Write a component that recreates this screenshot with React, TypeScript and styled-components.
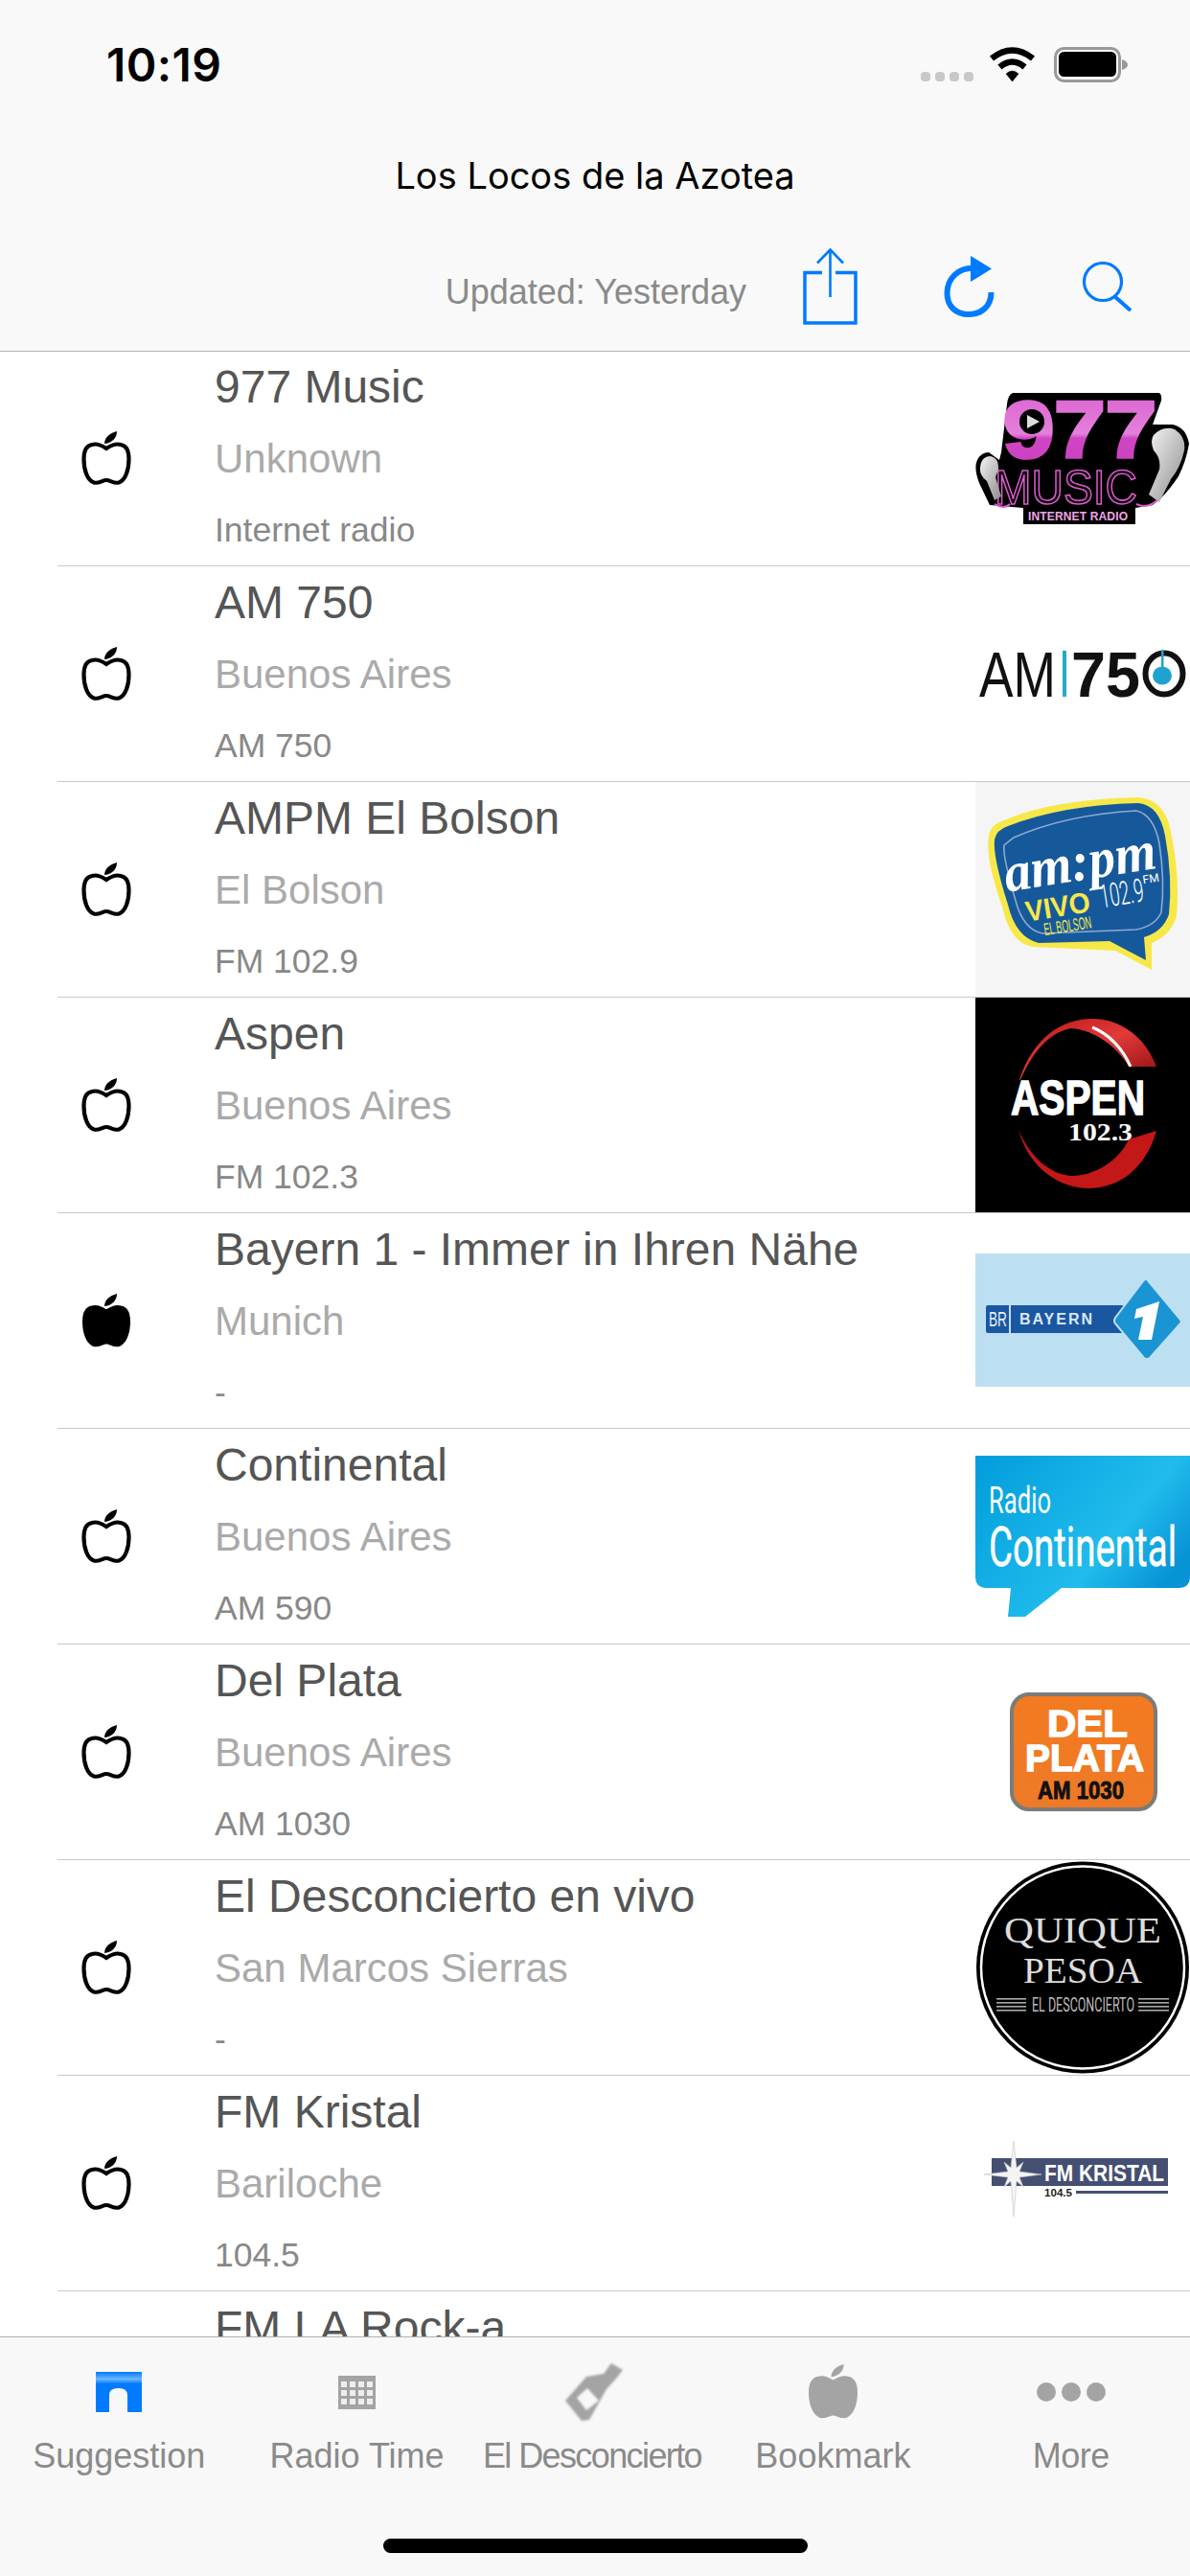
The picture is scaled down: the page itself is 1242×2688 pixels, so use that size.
import React from 'react';
import styled, { createGlobalStyle } from 'styled-components';

const Global = createGlobalStyle`
  html, body { margin: 0; padding: 0; background: #fff; }
  body { font-family: "Liberation Sans", Arial, sans-serif; overflow: hidden; }
`;

const Screen = styled.div`
  width: 1242px; height: 2688px; display: flex; flex-direction: column; overflow: hidden; background: #fff;
`;
const Header = styled.header`
  position: relative; z-index: 1; flex: none; height: 366px; background: #f9f9f9;
  box-shadow: 0 1px 0 #b4b4b4; display: flex; flex-direction: column;
`;
const StatusBar = styled.div`
  height: 132px; box-sizing: border-box; padding: 44px 65px 0 111px;
  display: flex; justify-content: space-between; align-items: flex-start;
`;
const Clock = styled.span`
  font: 600 48px/48px Inter, sans-serif; letter-spacing: 0.4px; color: #000;
`;
const StatusIcons = styled.div`
  display: flex; align-items: flex-start; margin-top: 5px;
`;
const Signal = styled.div`
  display: flex; gap: 5px; margin: 26px 16px 0 0;
`;
const SignalDot = styled.i`
  display: block; width: 10px; height: 10px; border-radius: 4px; background: #c8c8c8;
`;
const BatteryIcon = styled.svg`
  display: block; margin-left: 19px;
`;
const NavTitle = styled.div`
  height: 100px; box-sizing: border-box; padding-top: 2px; display: flex; align-items: center; justify-content: center;
  font: 400 38px Inter, sans-serif; color: #000;
`;
const Toolbar = styled.div`
  flex: 1; display: flex; align-items: center; justify-content: flex-end; padding-right: 60px;
`;
const Updated = styled.span`
  font-size: 36px; color: #8a8a8a; padding-top: 12px; margin-right: 59px;
`;
const ToolIcon = styled.svg<{ $gap?: number }>`
  display: block; flex: none; margin-right: ${p => p.$gap ?? 0}px;
`;
const List = styled.main`
  flex: 1; min-height: 0; overflow: hidden;
`;
const Row = styled.div`
  height: 225px; padding-left: 60px; box-sizing: border-box;
`;
const RowInner = styled.div`
  height: 225px; box-sizing: border-box; border-bottom: 1px solid #c8c8c8; display: flex;
`;
const FavCell = styled.div`
  flex: none; width: 102px; display: flex; align-items: center; justify-content: center; margin-right: 62px;
`;
const Texts = styled.div`
  flex: 1; min-width: 0;
`;
const Name = styled.div`
  font-size: 48px; line-height: 75px; color: #555; white-space: nowrap;
`;
const City = styled.div`
  font-size: 42px; line-height: 76px; color: #aaa; white-space: nowrap;
`;
const Freq = styled.div`
  font-size: 35.5px; line-height: 72px; color: #888; white-space: nowrap;
`;
const Thumb = styled.div<{ $bg?: string }>`
  flex: none; width: 224px; height: 224px; background: ${p => p.$bg ?? 'transparent'};
  svg { display: block; }
`;
const TabBar = styled.nav`
  position: relative; z-index: 1; flex: none; height: 250px; box-sizing: border-box; background: #f8f8f8;
  border-top: 1px solid #b0b0b0; display: flex; flex-direction: column;
`;
const Tabs = styled.div`
  display: grid; grid-template-columns: repeat(5, 1fr); padding-top: 22px;
`;
const Tab = styled.div`
  display: flex; flex-direction: column; align-items: center;
`;
const TabIconSlot = styled.div`
  height: 70px; display: flex; align-items: center; justify-content: center;
`;
const TabLabel = styled.span<{ $spacing?: number; $shift?: number }>`
  margin-top: 12px; font-size: 36px; line-height: 40px; color: #8a8a8a; white-space: nowrap;
  letter-spacing: ${p => p.$spacing ?? 0}px;
  margin-right: ${p => p.$shift ?? 0}px;
`;
const HomeBar = styled.div`
  align-self: center; margin-top: 66px; width: 443px; height: 15px; border-radius: 8px; background: #000;
`;
const SoftIcon = styled.svg<{ $blur?: number }>`
  display: block; filter: blur(${p => p.$blur ?? 0.7}px);
`;

const Apple = ({ filled, w = 52, h = 57, color = '#000' }: { filled?: boolean; w?: number; h?: number; color?: string }) => (
  <SoftIcon width={w} height={h} viewBox="0 0 52 57">
    <path d="M24 13 C24 7 29 2 37 0 C37 6 33 12 24 13 Z" fill={color} />
    <path
      d="M26 18 C20 14 14 13 11 14 C5 15 2.5 21 2.5 29 C2.5 40 6 51 13 53.5 C18 55 22 51 26 51 C30 51 34 55 39 53.5 C46 51 49.5 40 49.5 29 C49.5 21 47 15 41 14 C38 13 32 14 26 18 Z"
      fill={filled ? color : 'none'} stroke={color} strokeWidth={filled ? 3 : 4.2}
    />
  </SoftIcon>
);

const SANS = '"Liberation Sans", Arial, sans-serif';
const SERIF = '"Liberation Serif", "Times New Roman", serif';
const NARROW = 'Roboto, "Liberation Sans", sans-serif';

const Logo = ({ children }: { children: React.ReactNode }) => (
  <svg width={224} height={224} viewBox="0 0 224 224">{children}</svg>
);

const Logo977 = () => (
  <Logo>
    <defs>
      <linearGradient id="m977" x1="0" y1="0" x2="0" y2="1">
        <stop offset="0" stopColor="#d95fcf" /><stop offset="0.55" stopColor="#e480db" />
        <stop offset="0.6" stopColor="#cf45c3" /><stop offset="1" stopColor="#cb40bf" />
      </linearGradient>
      <linearGradient id="bud" x1="0" y1="0" x2="1" y2="1">
        <stop offset="0" stopColor="#f4f4f4" /><stop offset="1" stopColor="#8c8c8c" />
      </linearGradient>
    </defs>
    <path d="M39 44 H192 Q195 46 194 52 L185 77 H206 Q220 80 223 97 Q220 115 212 131 Q198 152 185 161 L167 164 V181 H50 V164 L15 161 L4 138 Q-2 122 2 114 Q6 106 14 106 L25 114 L27 106 L33 56 Q34 46 39 44 Z" fill="#000" />
    <text x="29" y="111" fontFamily={SANS} fontWeight="700" fontSize="84" fill="url(#m977)" stroke="url(#m977)" strokeWidth="3.5" textLength="160" lengthAdjust="spacingAndGlyphs">977</text>
    <circle cx="59" cy="74" r="13" fill="#000" />
    <path d="M54 67 L67 74 L54 81 Z" fill="#ddd" />
    <text x="20" y="160" fontFamily={SANS} fontSize="50" fill="none" stroke="#e05ad2" strokeWidth="1.6" textLength="149" lengthAdjust="spacingAndGlyphs">MUSIC</text>
    <path d="M20 160 Q30 166 36 160 M168 160 Q180 166 192 154" fill="none" stroke="#e05ad2" strokeWidth="2" />
    <rect x="50" y="164" width="117" height="17" fill="#000" />
    <text x="55" y="177" fontFamily={SANS} fontWeight="700" fontSize="12" fill="#f0a5e8" textLength="104" lengthAdjust="spacing">INTERNET RADIO</text>
    <path d="M186 88 Q196 78 208 82 Q220 90 218 104 Q214 122 204 134 L192 158 L181 150 L192 124 Q194 112 186 104 Q182 94 186 88 Z" fill="url(#bud)" />
    <path d="M5 122 Q6 110 16 110 Q25 112 24 124 L21 132 L27 152 L20 156 L12 136 Q4 130 5 122 Z" fill="url(#bud)" />
  </Logo>
);

const Logo750 = () => (
  <Logo>
    <text x="4" y="136" fontFamily={SANS} fontSize="66" fill="#111" textLength="80" lengthAdjust="spacingAndGlyphs">AM</text>
    <rect x="91" y="88" width="4" height="48" fill="#2aa6cb" />
    <text x="100" y="136" fontFamily={SANS} fontWeight="700" fontSize="67" fill="#111" textLength="72" lengthAdjust="spacingAndGlyphs">75</text>
    <ellipse cx="197" cy="112" rx="19.5" ry="21.5" fill="none" stroke="#111" strokeWidth="6" />
    <ellipse cx="195" cy="114" rx="10" ry="9.5" fill="#1ea3d0" />
    <rect x="194" y="87" width="2.5" height="22" fill="#1ea3d0" />
  </Logo>
);

const LogoAmpm = () => (
  <Logo>
    <path d="M30 40 Q80 18 170 16 Q198 18 204 52 Q214 100 210 140 Q204 160 184 168 L184 196 L146 176 L60 172 Q36 168 28 130 Q10 80 14 56 Q16 44 30 40 Z" fill="#f7e84a" />
    <path d="M34 46 Q90 24 170 22 Q192 24 198 56 Q206 100 202 138 Q196 156 176 162 L178 186 L140 166 L66 168 Q42 162 34 128 Q18 78 20 60 Q22 50 34 46 Z" fill="#16599a" />
    <path d="M40 58 Q95 34 168 30 Q186 34 192 64 Q198 104 194 136 Q188 150 168 154 L70 158 Q50 154 42 124 Q28 76 30 66 Z" fill="none" stroke="#8fa9d3" strokeWidth="1.6" />
    <g transform="rotate(-9 112 90)">
      <text x="30" y="102" fontFamily={SERIF} fontStyle="italic" fontWeight="700" fontSize="58" fill="#fff" textLength="160" lengthAdjust="spacingAndGlyphs">am:pm</text>
      <text x="46" y="136" fontFamily={SANS} fontWeight="700" fontSize="30" fill="#f7e84a" textLength="68" lengthAdjust="spacingAndGlyphs">VIVO</text>
      <text x="62" y="153" fontFamily={SANS} fontSize="18" fill="#f7e84a" textLength="50" lengthAdjust="spacingAndGlyphs">EL BOLSON</text>
      <text x="125" y="134" fontFamily={NARROW} fontWeight="300" fontSize="34" fill="#fff" textLength="46" lengthAdjust="spacingAndGlyphs">102.9</text>
      <text x="172" y="116" fontFamily={NARROW} fontSize="12" fill="#fff">FM</text>
    </g>
  </Logo>
);

const LogoAspen = () => (
  <Logo>
    <defs>
      <linearGradient id="aspR" x1="0" y1="0" x2="1" y2="1">
        <stop offset="0" stopColor="#b81414" /><stop offset="0.5" stopColor="#e23a3a" /><stop offset="1" stopColor="#8e0d0d" />
      </linearGradient>
    </defs>
    <rect width="224" height="224" fill="#000" />
    <path d="M46 86 C60 42 90 22 122 22 C152 22 178 42 189 72 L160 72 C148 52 126 34 100 32 C76 36 58 60 47 86 Z" fill="url(#aspR)" />
    <path d="M122 31 C140 38 154 54 162 72" fill="none" stroke="#fff" strokeWidth="3" />
    <path d="M45 138 C56 178 88 199 118 199 C150 199 178 178 189 139 L160 148 C150 170 125 186 100 186 C78 184 58 168 45 138 Z" fill="#c41717" />
    <text x="37" y="122" fontFamily={SANS} fontWeight="700" fontSize="50" fill="#fff" stroke="#fff" strokeWidth="1.4" textLength="140" lengthAdjust="spacingAndGlyphs">ASPEN</text>
    <text x="97" y="149" fontFamily={SERIF} fontWeight="700" fontSize="26" fill="#fff" textLength="67" lengthAdjust="spacingAndGlyphs">102.3</text>
  </Logo>
);

const LogoBayern = () => (
  <Logo>
    <rect y="42" width="224" height="139" fill="#bddff2" />
    <rect x="11" y="96" width="144" height="29" rx="2" fill="#1b57a0" />
    <rect x="35" y="96" width="2" height="29" fill="#bddff2" />
    <text x="14" y="118" fontFamily={SANS} fontSize="22" fill="#e8f1f8" textLength="19" lengthAdjust="spacingAndGlyphs">BR</text>
    <text x="46" y="116" fontFamily={SANS} fontWeight="700" fontSize="16" fill="#d8e8f4" textLength="76" lengthAdjust="spacing">BAYERN</text>
    <path d="M179 69 L214 111 Q216 113 214 115 L182 151 Q179 153 176 151 L146 115 Q144 113 146 109 L175 71 Q177 68 179 69 Z" fill="#1a94d2" stroke="#bddff2" strokeWidth="2" />
    <path d="M168 100 L192 92 L184 132 L170 132 L175 108 L166 110 Z" fill="#fff" />
  </Logo>
);

const LogoContinental = () => (
  <Logo>
    <defs>
      <linearGradient id="cont" x1="0" y1="0" x2="1" y2="0.6">
        <stop offset="0" stopColor="#019ddc" /><stop offset="0.7" stopColor="#21bcec" /><stop offset="1" stopColor="#0793d6" />
      </linearGradient>
    </defs>
    <path d="M0 28 H224 V154 Q224 166 212 166 H90 L52 196 L34 196 L37 166 H12 Q0 166 0 154 Z" fill="url(#cont)" />
    <text x="14" y="88" fontFamily={NARROW} fontSize="38" fill="#fff" textLength="65" lengthAdjust="spacingAndGlyphs">Radio</text>
    <text x="14" y="143" fontFamily={NARROW} fontSize="58" fill="#fff" stroke="#fff" strokeWidth="0.5" textLength="196" lengthAdjust="spacingAndGlyphs">Continental</text>
  </Logo>
);

const LogoDelPlata = () => (
  <Logo>
    <defs>
      <linearGradient id="dpl" x1="0" y1="0" x2="0" y2="1">
        <stop offset="0" stopColor="#f37a20" /><stop offset="1" stopColor="#ee7a28" />
      </linearGradient>
    </defs>
    <rect x="38" y="52" width="150" height="120" rx="18" fill="url(#dpl)" stroke="#7b7b7b" strokeWidth="4" />
    <text x="75" y="96" fontFamily={SANS} fontWeight="700" fontSize="38" fill="#fff" stroke="#fff" strokeWidth="1.4" textLength="84" lengthAdjust="spacingAndGlyphs">DEL</text>
    <text x="52" y="132" fontFamily={SANS} fontWeight="700" fontSize="38" fill="#fff" stroke="#fff" strokeWidth="1.4" textLength="124" lengthAdjust="spacingAndGlyphs">PLATA</text>
    <text x="65" y="161" fontFamily={SANS} fontWeight="700" fontSize="25" fill="#111" stroke="#111" strokeWidth="0.9" textLength="90" lengthAdjust="spacingAndGlyphs">AM 1030</text>
  </Logo>
);

const LogoQuique = () => (
  <Logo>
    <ellipse cx="112" cy="112" rx="111" ry="110.5" fill="#000" />
    <ellipse cx="112" cy="112" rx="106" ry="105.5" fill="none" stroke="#fff" strokeWidth="2.5" />
    <text x="30" y="86" fontFamily={SERIF} fontSize="38" fill="#ddd" textLength="164" lengthAdjust="spacingAndGlyphs">QUIQUE</text>
    <text x="50" y="128" fontFamily={SERIF} fontSize="38" fill="#ddd" textLength="124" lengthAdjust="spacingAndGlyphs">PESOA</text>
    <text x="59" y="158" fontFamily={NARROW} fontSize="20" fill="#bbb" textLength="107" lengthAdjust="spacingAndGlyphs">EL DESCONCIERTO</text>
    {[144, 148, 152, 156].map(y => (
      <g key={y} fill="#aaa">
        <rect x="22" y={y} width="31" height="1.6" />
        <rect x="170" y={y} width="32" height="1.6" />
      </g>
    ))}
  </Logo>
);

const LogoKristal = () => (
  <Logo>
    <rect x="17" y="86" width="184" height="29" fill="#454f72" />
    <path d="M40 68 L43 96 L50 90 L46 100 L69 103 L46 106 L50 116 L43 110 L40 147 L37 110 L30 116 L34 106 L9 103 L34 100 L30 90 L37 96 Z" fill="#f4f4f4" stroke="#c4c4c4" strokeWidth="0.6" />
    <text x="72" y="110" fontFamily={SANS} fontWeight="700" fontSize="24" fill="#fff" textLength="125" lengthAdjust="spacingAndGlyphs">FM KRISTAL</text>
    <text x="72" y="126" fontFamily={SANS} fontWeight="700" fontSize="10.5" fill="#222" textLength="29" lengthAdjust="spacingAndGlyphs">104.5</text>
    <rect x="105" y="120" width="96" height="3" fill="#454f72" />
  </Logo>
);

type Station = { name: string; city?: string; freq?: string; fav?: boolean; logo?: React.ComponentType; bg?: string };

const stations: Station[] = [
  { name: '977 Music', city: 'Unknown', freq: 'Internet radio', logo: Logo977 },
  { name: 'AM 750', city: 'Buenos Aires', freq: 'AM 750', logo: Logo750 },
  { name: 'AMPM El Bolson', city: 'El Bolson', freq: 'FM 102.9', logo: LogoAmpm, bg: '#f5f5f5' },
  { name: 'Aspen', city: 'Buenos Aires', freq: 'FM 102.3', logo: LogoAspen },
  { name: 'Bayern 1 - Immer in Ihren Nähe', city: 'Munich', freq: '-', fav: true, logo: LogoBayern },
  { name: 'Continental', city: 'Buenos Aires', freq: 'AM 590', logo: LogoContinental },
  { name: 'Del Plata', city: 'Buenos Aires', freq: 'AM 1030', logo: LogoDelPlata },
  { name: 'El Desconcierto en vivo', city: 'San Marcos Sierras', freq: '-', logo: LogoQuique },
  { name: 'FM Kristal', city: 'Bariloche', freq: '104.5', logo: LogoKristal },
  { name: 'FM LA Rock-a', city: 'Buenos Aires', freq: '-' },
];

const BLUE = '#007aff';
const GRAY = '#a4a4a4';

const ArchIcon = () => (
  <svg width={48} height={42} viewBox="0 0 48 42">
    <defs>
      <linearGradient id="arch" x1="0" y1="0" x2="0" y2="1">
        <stop offset="0" stopColor="#007aff" /><stop offset="0.18" stopColor="#6cb6ff" />
        <stop offset="0.3" stopColor="#007aff" /><stop offset="1" stopColor="#007aff" />
      </linearGradient>
    </defs>
    <path d="M0 0 H48 V42 H33 V24 Q33 17 23.5 17 Q14 17 14 24 V42 H0 Z" fill="url(#arch)" />
  </svg>
);

const GridIcon = () => (
  <svg width={39} height={35} viewBox="0 0 39 35">
    <rect width="39" height="35" fill={GRAY} />
    {[6, 15, 24].map(y => [3, 12, 21, 30].map(x => (
      <rect key={`${x}-${y}`} x={x} y={y} width="6" height="6" fill="#eee" />
    )))}
  </svg>
);

const BottleIcon = () => (
  <SoftIcon $blur={1} width={61} height={60} viewBox="0 0 61 60">
    <path d="M48 0 L60 7 L53 16 L43 27 L25 59 L17 60 L0 39 L22 14 L40 11 Z M23 26 L12 36 L22 49 L35 39 Z" fill={GRAY} fillRule="evenodd" />
  </SoftIcon>
);

const DotsIcon = () => (
  <svg width={72} height={20} viewBox="0 0 72 20">
    <circle cx="10" cy="10" r="10" fill={GRAY} />
    <circle cx="36" cy="10" r="10" fill={GRAY} />
    <circle cx="62" cy="10" r="10" fill={GRAY} />
  </svg>
);

const tabs: { label: string; icon: React.ReactNode; spacing?: number; shift?: number }[] = [
  { label: 'Suggestion', icon: <ArchIcon /> },
  { label: 'Radio Time', icon: <GridIcon /> },
  { label: 'El Desconcierto', icon: <BottleIcon />, spacing: -1.6, shift: 6 },
  { label: 'Bookmark', icon: <Apple filled w={53} h={60} color={GRAY} /> },
  { label: 'More', icon: <DotsIcon />, spacing: -0.5 },
];

export default function App() {
  return (
    <Screen>
      <Global />
      <Header>
        <StatusBar>
          <Clock>10:19</Clock>
          <StatusIcons>
            <Signal>
              {[0, 1, 2, 3].map(i => <SignalDot key={i} />)}
            </Signal>
            <svg width={49} height={36} viewBox="0 0 49 36" fill="none" stroke="#000">
              <path d="M3 12 Q24.5 -5 46 12" strokeWidth="6.5" />
              <path d="M11.5 21 Q24.5 10 37.5 21" strokeWidth="6.5" />
              <path d="M18 28 L24.5 36 L31 28 Q24.5 22 18 28 Z" fill="#000" strokeWidth="0.5" />
            </svg>
            <BatteryIcon width={77} height={37} viewBox="0 0 77 37">
              <rect x="1.5" y="1.5" width="67" height="34" rx="9" fill="none" stroke="#999" strokeWidth="3" />
              <rect x="5" y="5" width="60" height="26" rx="5.5" fill="#000" />
              <path d="M71 13 Q77 15 77 18.5 Q77 22 71 24 Z" fill="#999" />
            </BatteryIcon>
          </StatusIcons>
        </StatusBar>
        <NavTitle>Los Locos de la Azotea</NavTitle>
        <Toolbar>
          <Updated>Updated: Yesterday</Updated>
          <ToolIcon $gap={90} width={57} height={80} viewBox="0 0 57 80" fill="none" stroke={BLUE}>
            <path d="M20 25.5 H2 V78 H55 V25.5 H34" strokeWidth="3.5" />
            <path d="M28.5 2 V51 M15 15.5 L28.5 1.5 L42 15.5" strokeWidth="2.6" />
          </ToolIcon>
          <ToolIcon $gap={91} width={53} height={64} viewBox="0 0 53 64" fill="none" stroke={BLUE}>
            <path d="M34 13 C15 11 3.5 24 3.5 39 C3.5 53 13 61 26 61 C40 61 49.5 52 49.5 38" strokeWidth="6" />
            <path d="M28 0 L50 13.5 L28 27 Z" fill={BLUE} stroke="none" />
          </ToolIcon>
          <ToolIcon width={53} height={52} viewBox="0 0 53 52" fill="none" stroke={BLUE}>
            <circle cx="22" cy="21" r="19.5" strokeWidth="3.2" />
            <path d="M34 36 L51 51" strokeWidth="4" />
          </ToolIcon>
        </Toolbar>
      </Header>
      <List>
        {stations.map(s => {
          const LogoComp = s.logo;
          return (
            <Row key={s.name}>
              <RowInner>
                <FavCell><Apple filled={s.fav} /></FavCell>
                <Texts>
                  <Name>{s.name}</Name>
                  <City>{s.city}</City>
                  <Freq>{s.freq}</Freq>
                </Texts>
                <Thumb $bg={s.bg}>{LogoComp && <LogoComp />}</Thumb>
              </RowInner>
            </Row>
          );
        })}
      </List>
      <TabBar>
        <Tabs>
          {tabs.map(t => (
            <Tab key={t.label}>
              <TabIconSlot>{t.icon}</TabIconSlot>
              <TabLabel $spacing={t.spacing} $shift={t.shift}>{t.label}</TabLabel>
            </Tab>
          ))}
        </Tabs>
        <HomeBar />
      </TabBar>
    </Screen>
  );
}
